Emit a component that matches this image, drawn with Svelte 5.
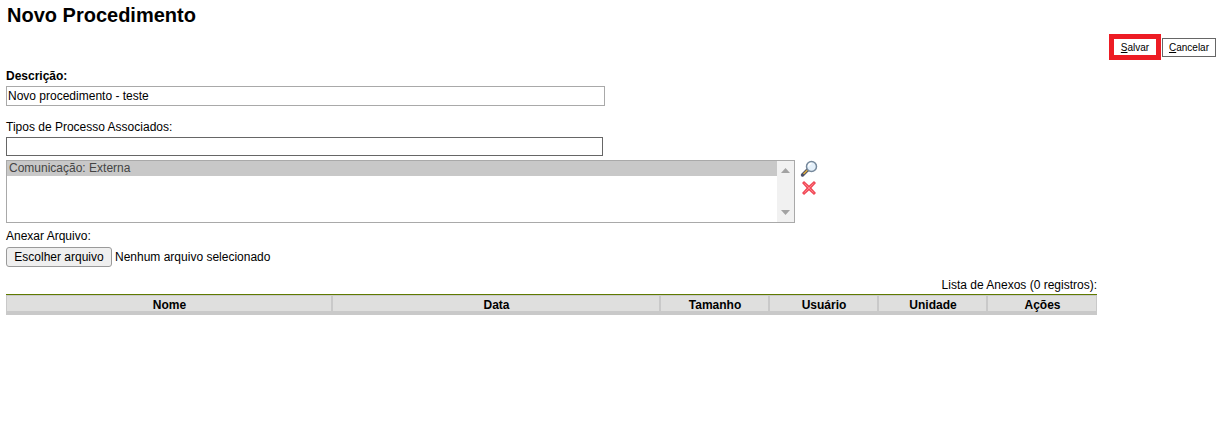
<script>
  const cols = [
    { name: 'Nome', w: 326 },
    { name: 'Data', w: 328 },
    { name: 'Tamanho', w: 109 },
    { name: 'Usuário', w: 109 },
    { name: 'Unidade', w: 109 },
    { name: 'Ações', w: 110 }
  ];
</script>

<div class="page">
  <h1>Novo Procedimento</h1>
  <div class="actions">
    <button class="btn salvar"><u>S</u>alvar</button>
    <button class="btn cancelar"><u>C</u>ancelar</button>
  </div>

  <div class="form">
    <label class="bold" for="d">Descrição:</label>
    <input id="d" class="desc" value="Novo procedimento - teste" />

    <label class="tipos" for="t">Tipos de Processo Associados:</label>
    <input id="t" class="tipo" />

    <div class="listrow">
      <div class="list">
        <div class="items"><div class="sel">Comunicação: Externa</div></div>
        <div class="scroll">
          <svg width="9" height="5" viewBox="0 0 9 5"><path d="M4.5 0 9 5H0z" fill="#a3a3a3" /></svg>
          <svg width="9" height="5" viewBox="0 0 9 5"><path d="M0 0h9L4.5 5z" fill="#a3a3a3" /></svg>
        </div>
      </div>
      <div class="icons">
        <svg width="18" height="18" viewBox="0 0 18 18">
          <path d="M7.5 10 2.500 15" stroke="#4a4f68" stroke-width="3.400" stroke-linecap="round" />
          <path d="M7.5 10 3.500 14" stroke="#dcaa3a" stroke-width="1.600" />
          <circle cx="11.500" cy="6.500" r="5" fill="#e4f0fa" stroke="#76899c" stroke-width="1.500" />
          <path d="M8.500 6.500a3 3 0 0 1 3-3" stroke="#fff" stroke-width="1.500" fill="none" />
        </svg>
        <svg width="16" height="16" viewBox="0 0 16 16">
          <path d="M1 3 3 1 8 5.500 13 1 15 3 10.500 8 15 13 13 15 8 10.500 3 15 1 13 5.500 8z" fill="#f04a58" />
          <path d="M3.500 3.500 12.500 12.500M12.500 3.500 3.500 12.500" stroke="#ff8088" stroke-width="1" />
        </svg>
      </div>
    </div>

    <label class="anexar" for="f">Anexar Arquivo:</label>
    <div class="file">
      <button id="f" class="choose">Escolher arquivo</button>
      <span>Nenhum arquivo selecionado</span>
    </div>
  </div>

  <div class="tablewrap">
    <div class="caption">Lista de Anexos (0 registros):</div>
    <div class="thead">
      {#each cols as c}
        <div class="th" style="width: {c.w}px">{c.name}</div>
      {/each}
    </div>
  </div>
</div>

<style>
  :global(body) {
    margin: 0;
    background: #fff;
    font-family: "Liberation Sans", Arial, sans-serif;
    font-size: 12px;
    color: #000;
  }
  .page {
    height: 422px;
    box-sizing: border-box;
    padding-top: 4px;
    overflow: hidden;
  }
  h1 {
    margin: 0 0 0 7px;
    font-size: 20px;
    line-height: 22px;
    font-weight: bold;
  }
  .actions {
    display: flex;
    justify-content: flex-end;
    align-items: center;
    gap: 1px;
    margin-top: 8px;
    padding-right: 4px;
    height: 26px;
  }
  .btn {
    font-family: inherit;
    font-size: 10px;
    background: #fff;
    color: #000;
    padding: 0;
    box-sizing: border-box;
  }
  .salvar {
    width: 52px;
    height: 26px;
    border: 5px solid #ed1c24;
  }
  .cancelar {
    width: 54px;
    height: 19px;
    border: 1px solid #666;
  }
  .form {
    display: flex;
    flex-direction: column;
    align-items: flex-start;
    padding-left: 6px;
    margin-top: 9px;
  }
  label {
    display: block;
    line-height: 14px;
  }
  .bold {
    font-weight: bold;
  }
  input {
    font-family: inherit;
    font-size: 12px;
    box-sizing: border-box;
    padding: 0 1px;
    margin: 0;
    background: #fff;
    color: #000;
    outline: none;
  }
  .desc {
    width: 599px;
    height: 20px;
    margin-top: 3px;
    border: 1px solid #a9a9a9;
  }
  .tipos {
    margin-top: 14px;
  }
  .tipo {
    width: 597px;
    height: 19px;
    margin-top: 3px;
    border: 1px solid #666;
  }
  .listrow {
    display: flex;
    margin-top: 4px;
  }
  .list {
    display: flex;
    width: 789px;
    height: 63px;
    box-sizing: border-box;
    border: 1px solid #a9a9a9;
    color: #444;
  }
  .items {
    flex: 1;
  }
  .sel {
    background: #c8c8c8;
    height: 15px;
    line-height: 15px;
    padding-left: 2px;
  }
  .scroll {
    width: 17px;
    background: #f1f1f1;
    display: flex;
    flex-direction: column;
    justify-content: space-between;
    align-items: center;
    padding: 7px 0;
    box-sizing: border-box;
  }
  .icons {
    display: flex;
    flex-direction: column;
    align-items: center;
    gap: 2px;
    margin-left: 5px;
    width: 18px;
  }
  .anexar {
    margin-top: 6px;
  }
  .file {
    display: flex;
    align-items: center;
    margin-top: 4px;
    height: 20px;
  }
  .choose {
    width: 106px;
    height: 20px;
    font-family: inherit;
    font-size: 12px;
    color: #000;
    background: #efefef;
    border: 1px solid #9a9a9a;
    border-radius: 3px;
    padding: 0;
  }
  .file span {
    margin-left: 3px;
  }
  .tablewrap {
    width: 1091px;
    margin: 11px 0 0 6px;
  }
  .caption {
    text-align: right;
    line-height: 14px;
    margin-bottom: 2px;
  }
  .thead {
    display: flex;
    border-top: 1px solid #5f7a00;
    background: #c9c9c9;
    padding: 1px 0 4px;
  }
  .th {
    box-sizing: border-box;
    background: #dfdfde;
    height: 15px;
    line-height: 18px;
    padding-left: 1px;
    border-left: 1px solid #c9c9c9;
    border-right: 1px solid #c9c9c9;
    text-align: center;
    font-weight: bold;
  }
</style>
